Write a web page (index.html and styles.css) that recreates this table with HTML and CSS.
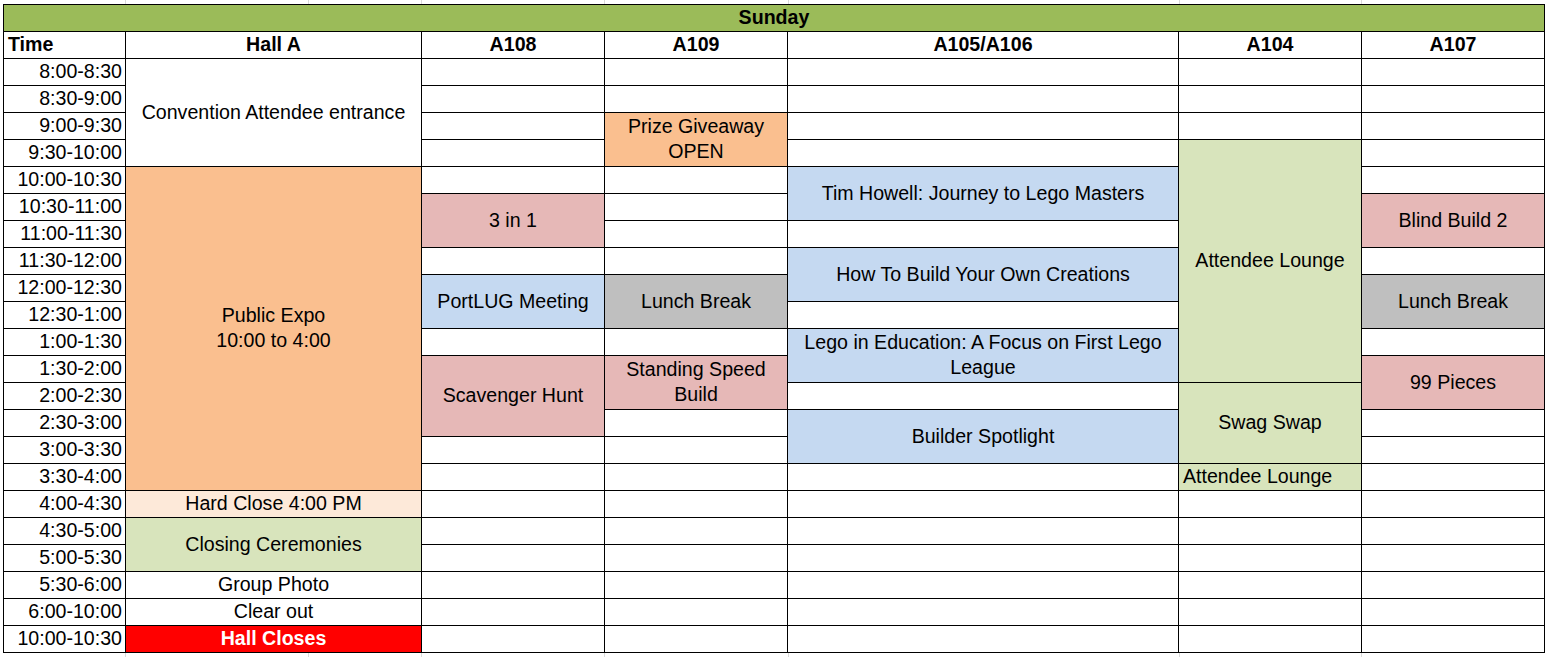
FILE: index.html
```html
<!DOCTYPE html>
<html lang="en">
<head>
<meta charset="utf-8">
<title>Sunday Schedule</title>
<link rel="stylesheet" href="styles.css">
</head>
<body>
<div class="strip">
  <span class="g1"></span><span class="g2"></span><span class="g3"></span><span class="g4"></span><span class="g5"></span><span class="g6"></span><span class="g7"></span>
</div>
<div class="sheet">
  <div class="day">Sunday</div>

  <div class="head left">Time</div>
  <div class="head">Hall A</div>
  <div class="head">A108</div>
  <div class="head">A109</div>
  <div class="head">A105/A106</div>
  <div class="head">A104</div>
  <div class="head">A107</div>

  <!-- 1 -->
  <div class="time">8:00-8:30</div>
  <div class="cell r4">Convention Attendee entrance</div>
  <div class="cell"></div><div class="cell"></div><div class="cell"></div><div class="cell"></div><div class="cell"></div>
  <!-- 2 -->
  <div class="time">8:30-9:00</div>
  <div class="cell"></div><div class="cell"></div><div class="cell"></div><div class="cell"></div><div class="cell"></div>
  <!-- 3 -->
  <div class="time">9:00-9:30</div>
  <div class="cell"></div>
  <div class="cell r2 orange">Prize Giveaway<br>OPEN</div>
  <div class="cell"></div><div class="cell"></div><div class="cell"></div>
  <!-- 4 -->
  <div class="time">9:30-10:00</div>
  <div class="cell"></div>
  <div class="cell"></div>
  <div class="cell r9 green">Attendee Lounge</div>
  <div class="cell"></div>
  <!-- 5 -->
  <div class="time">10:00-10:30</div>
  <div class="cell r12 orange">Public Expo<br>10:00 to 4:00</div>
  <div class="cell"></div>
  <div class="cell"></div>
  <div class="cell r2 blue">Tim Howell: Journey to Lego Masters</div>
  <div class="cell"></div>
  <!-- 6 -->
  <div class="time">10:30-11:00</div>
  <div class="cell r2 pink">3 in 1</div>
  <div class="cell"></div>
  <div class="cell r2 pink">Blind Build 2</div>
  <!-- 7 -->
  <div class="time">11:00-11:30</div>
  <div class="cell"></div>
  <div class="cell"></div>
  <!-- 8 -->
  <div class="time">11:30-12:00</div>
  <div class="cell"></div>
  <div class="cell"></div>
  <div class="cell r2 blue">How To Build Your Own Creations</div>
  <div class="cell"></div>
  <!-- 9 -->
  <div class="time">12:00-12:30</div>
  <div class="cell r2 blue">PortLUG Meeting</div>
  <div class="cell r2 gray">Lunch Break</div>
  <div class="cell r2 gray">Lunch Break</div>
  <!-- 10 -->
  <div class="time">12:30-1:00</div>
  <div class="cell"></div>
  <!-- 11 -->
  <div class="time">1:00-1:30</div>
  <div class="cell"></div>
  <div class="cell"></div>
  <div class="cell r2 blue">Lego in Education: A Focus on First Lego League</div>
  <div class="cell"></div>
  <!-- 12 -->
  <div class="time">1:30-2:00</div>
  <div class="cell r3 pink">Scavenger Hunt</div>
  <div class="cell r2 pink">Standing Speed<br>Build</div>
  <div class="cell r2 pink">99 Pieces</div>
  <!-- 13 -->
  <div class="time">2:00-2:30</div>
  <div class="cell"></div>
  <div class="cell r3 green">Swag Swap</div>
  <!-- 14 -->
  <div class="time">2:30-3:00</div>
  <div class="cell"></div>
  <div class="cell r2 blue">Builder Spotlight</div>
  <div class="cell"></div>
  <!-- 15 -->
  <div class="time">3:00-3:30</div>
  <div class="cell"></div>
  <div class="cell"></div>
  <div class="cell"></div>
  <!-- 16 -->
  <div class="time">3:30-4:00</div>
  <div class="cell"></div>
  <div class="cell"></div>
  <div class="cell"></div>
  <div class="cell green left">Attendee Lounge</div>
  <div class="cell"></div>
  <!-- 17 -->
  <div class="time">4:00-4:30</div>
  <div class="cell peach">Hard Close 4:00 PM</div>
  <div class="cell"></div><div class="cell"></div><div class="cell"></div><div class="cell"></div><div class="cell"></div>
  <!-- 18 -->
  <div class="time">4:30-5:00</div>
  <div class="cell r2 green">Closing Ceremonies</div>
  <div class="cell"></div><div class="cell"></div><div class="cell"></div><div class="cell"></div><div class="cell"></div>
  <!-- 19 -->
  <div class="time">5:00-5:30</div>
  <div class="cell"></div><div class="cell"></div><div class="cell"></div><div class="cell"></div><div class="cell"></div>
  <!-- 20 -->
  <div class="time">5:30-6:00</div>
  <div class="cell">Group Photo</div>
  <div class="cell"></div><div class="cell"></div><div class="cell"></div><div class="cell"></div><div class="cell"></div>
  <!-- 21 -->
  <div class="time">6:00-10:00</div>
  <div class="cell">Clear out</div>
  <div class="cell"></div><div class="cell"></div><div class="cell"></div><div class="cell"></div><div class="cell"></div>
  <!-- 22 -->
  <div class="time">10:00-10:30</div>
  <div class="cell red">Hall Closes</div>
  <div class="cell"></div><div class="cell"></div><div class="cell"></div><div class="cell"></div><div class="cell"></div>
</div>
<div class="strip">
  <span class="g1"></span><span class="g2"></span><span class="g3"></span><span class="g4"></span><span class="g5"></span><span class="g6"></span><span class="g7"></span>
</div>
</body>
</html>
```
FILE: styles.css
```css
html, body {
  margin: 0;
  padding: 0;
  background: #ffffff;
}

body {
  font-family: "Liberation Sans", Arial, sans-serif;
  font-size: 19.6px;
  color: #000000;
  width: 1548px;
  height: 657px;
  overflow: hidden;
}

.strip {
  display: flex;
  height: 4px;
}

.strip span {
  display: block;
  height: 100%;
  border-right: 1px solid #dadada;
  flex: none;
}

.strip .g1 { width: 125px; }
.strip .g2 { width: 182px; }
.strip .g3 { width: 112px; }
.strip .g4 { width: 182px; }
.strip .g5 { width: 183px; }
.strip .g6 { width: 390px; }
.strip .g7 { width: 181px; }

.sheet {
  display: grid;
  grid-template-columns: 121px 295px 182px 182px 390px 182px 182px;
  grid-auto-rows: 26px;
  gap: 1px;
  padding: 1px;
  margin-left: 3px;
  width: 1540px;
  background: #000000;
}

.sheet > div {
  background: #ffffff;
  display: flex;
  align-items: center;
  justify-content: center;
  text-align: center;
  line-height: 25px;
  padding-bottom: 1px;
  box-sizing: border-box;
  white-space: nowrap;
  overflow: hidden;
}

.day {
  grid-column: 1 / -1;
  font-weight: bold;
}

.sheet > .day {
  background: #9bbb59;
}

.head {
  font-weight: bold;
}

.sheet > .left {
  justify-content: flex-start;
  padding-left: 4px;
}

.sheet > .time {
  justify-content: flex-end;
  padding-right: 3px;
}

.sheet > .r2 { grid-row: span 2; white-space: normal; }
.sheet > .r3 { grid-row: span 3; }
.sheet > .r4 { grid-row: span 4; }
.sheet > .r9 { grid-row: span 9; }
.sheet > .r12 { grid-row: span 12; }

.sheet > .orange { background: #fabf8f; }
.sheet > .peach { background: #fde9d9; }
.sheet > .green { background: #d8e4bc; }
.sheet > .pink { background: #e6b8b7; }
.sheet > .blue { background: #c5d9f1; }
.sheet > .gray { background: #bfbfbf; }
.sheet > .red {
  background: #ff0000;
  color: #ffffff;
  font-weight: bold;
}
```
